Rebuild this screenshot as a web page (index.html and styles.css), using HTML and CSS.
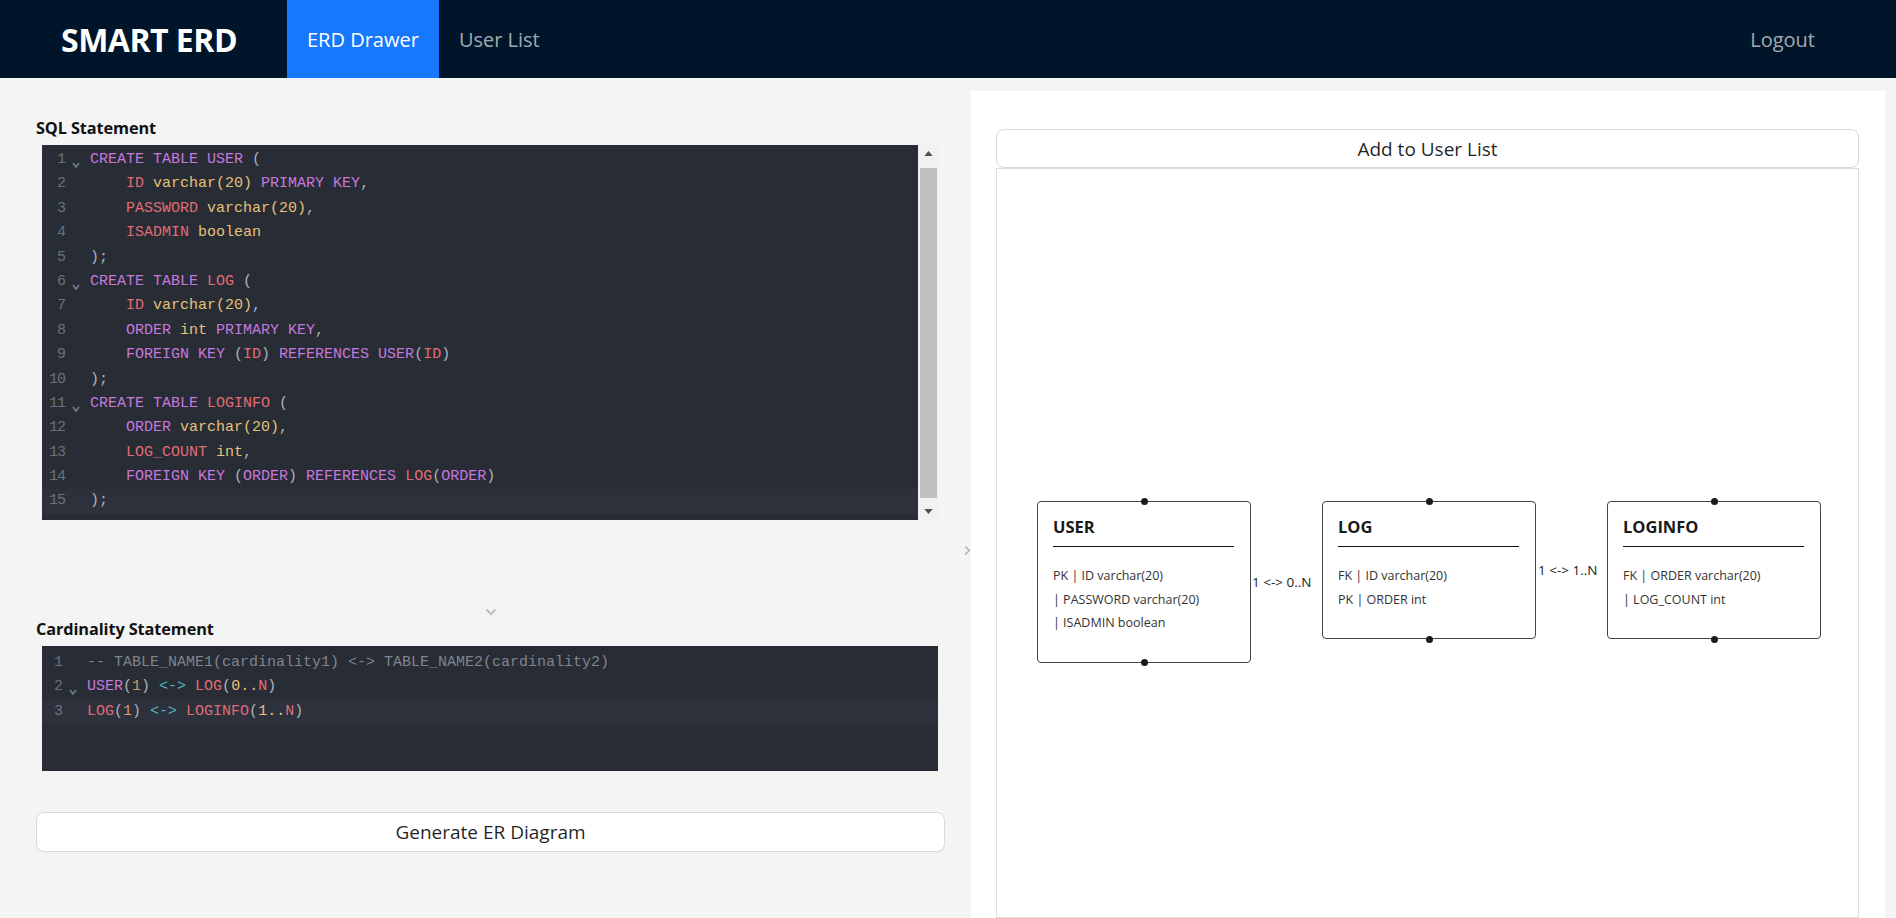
FILE: index.html
```html
<!DOCTYPE html>
<html lang="en">
<head>
<meta charset="utf-8">
<title>SMART ERD</title>
<link rel="stylesheet" href="styles.css">
</head>
<body>
<header class="topbar">
  <div class="logo">SMART ERD</div>
  <nav class="menu">
    <a class="menu-item active">ERD Drawer</a>
    <a class="menu-item">User List</a>
  </nav>
  <a class="logout">Logout</a>
</header>
<main class="main">
  <section class="left-pane">
    <h2 class="section-label">SQL Statement</h2>
    <div class="editor sql-editor">
      <div class="code-area">
        <div class="line"><span class="gutter">1<svg class="fold" viewBox="0 0 8 6"><path d="M1 1 L4 5 L7 1"/></svg></span><span class="txt"><span class="k">CREATE TABLE USER</span> (</span></div>
        <div class="line"><span class="gutter">2</span><span class="txt">    <span class="v">ID</span> <span class="t">varchar(20)</span> <span class="k">PRIMARY KEY</span>,</span></div>
        <div class="line"><span class="gutter">3</span><span class="txt">    <span class="v">PASSWORD</span> <span class="t">varchar(20)</span>,</span></div>
        <div class="line"><span class="gutter">4</span><span class="txt">    <span class="v">ISADMIN</span> <span class="t">boolean</span></span></div>
        <div class="line"><span class="gutter">5</span><span class="txt">);</span></div>
        <div class="line"><span class="gutter">6<svg class="fold" viewBox="0 0 8 6"><path d="M1 1 L4 5 L7 1"/></svg></span><span class="txt"><span class="k">CREATE TABLE</span> <span class="v">LOG</span> (</span></div>
        <div class="line"><span class="gutter">7</span><span class="txt">    <span class="v">ID</span> <span class="t">varchar(20)</span>,</span></div>
        <div class="line"><span class="gutter">8</span><span class="txt">    <span class="k">ORDER</span> <span class="t">int</span> <span class="k">PRIMARY KEY</span>,</span></div>
        <div class="line"><span class="gutter">9</span><span class="txt">    <span class="k">FOREIGN KEY</span> (<span class="v">ID</span>) <span class="k">REFERENCES USER</span>(<span class="v">ID</span>)</span></div>
        <div class="line"><span class="gutter">10</span><span class="txt">);</span></div>
        <div class="line"><span class="gutter">11<svg class="fold" viewBox="0 0 8 6"><path d="M1 1 L4 5 L7 1"/></svg></span><span class="txt"><span class="k">CREATE TABLE</span> <span class="v">LOGINFO</span> (</span></div>
        <div class="line"><span class="gutter">12</span><span class="txt">    <span class="k">ORDER</span> <span class="t">varchar(20)</span>,</span></div>
        <div class="line"><span class="gutter">13</span><span class="txt">    <span class="v">LOG_COUNT</span> <span class="t">int</span>,</span></div>
        <div class="line"><span class="gutter">14</span><span class="txt">    <span class="k">FOREIGN KEY</span> (<span class="k">ORDER</span>) <span class="k">REFERENCES</span> <span class="v">LOG</span>(<span class="k">ORDER</span>)</span></div>
        <div class="line active"><span class="gutter">15</span><span class="txt">);</span></div>
      </div>
      <div class="scrollbar">
        <div class="sb-arrow"><svg viewBox="0 0 10 6"><path d="M0 6 L5 0 L10 6 Z"/></svg></div>
        <div class="sb-thumb"></div>
        <div class="sb-arrow sb-down"><svg viewBox="0 0 10 6"><path d="M0 0 L5 6 L10 0 Z"/></svg></div>
      </div>
    </div>
    <div class="split-handle">
      <svg class="chev-down" viewBox="0 0 12 8"><path d="M1.5 1.5 L6 6 L10.5 1.5"/></svg>
    </div>
    <h2 class="section-label">Cardinality Statement</h2>
    <div class="editor card-editor">
      <div class="code-area">
        <div class="line"><span class="gutter">1</span><span class="txt"><span class="c">-- TABLE_NAME1(cardinality1) &lt;-&gt; TABLE_NAME2(cardinality2)</span></span></div>
        <div class="line"><span class="gutter">2<svg class="fold" viewBox="0 0 8 6"><path d="M1 1 L4 5 L7 1"/></svg></span><span class="txt"><span class="k">USER</span>(<span class="n">1</span>) <span class="o">&lt;-&gt;</span> <span class="v">LOG</span>(<span class="t">0..</span><span class="v">N</span>)</span></div>
        <div class="line active"><span class="gutter">3</span><span class="txt"><span class="v">LOG</span>(<span class="n">1</span>) <span class="o">&lt;-&gt;</span> <span class="v">LOGINFO</span>(<span class="t">1..</span><span class="v">N</span>)</span></div>
      </div>
    </div>
    <button class="btn generate-btn">Generate ER Diagram</button>
  </section>
  <div class="divider">
    <svg class="chev-right" viewBox="0 0 8 12"><path d="M1.5 1.5 L6 6 L1.5 10.5"/></svg>
  </div>
  <section class="right-pane">
    <button class="btn add-btn">Add to User List</button>
    <div class="diagram">
      <div class="entity entity-user">
        <h3 class="entity-title">USER</h3>
        <ul class="attrs">
          <li>PK | ID varchar(20)</li>
          <li>| PASSWORD varchar(20)</li>
          <li>| ISADMIN boolean</li>
        </ul>
      </div>
      <div class="edge-label label-1">1 &lt;-&gt; 0..N</div>
      <div class="entity entity-log">
        <h3 class="entity-title">LOG</h3>
        <ul class="attrs">
          <li>FK | ID varchar(20)</li>
          <li>PK | ORDER int</li>
        </ul>
      </div>
      <div class="edge-label label-2">1 &lt;-&gt; 1..N</div>
      <div class="entity entity-loginfo">
        <h3 class="entity-title">LOGINFO</h3>
        <ul class="attrs">
          <li>FK | ORDER varchar(20)</li>
          <li>| LOG_COUNT int</li>
        </ul>
      </div>
    </div>
  </section>
</main>
</body>
</html>
```

FILE: styles.css
```css
* { box-sizing: border-box; }
html, body { margin: 0; height: 100%; }
body {
  font-family: "Open Sans", "Noto Sans", sans-serif;
  background: #f4f4f4;
  overflow: hidden;
}

/* ---------- header ---------- */
.topbar {
  height: 78px;
  background: #001529;
  display: flex;
  align-items: stretch;
}
.logo {
  width: 287px;
  padding-left: 61px;
  display: flex;
  align-items: center;
  color: #fff;
  font-size: 32px;
  font-weight: 700;
  letter-spacing: -0.5px;
}
.menu { display: flex; }
.menu-item {
  display: flex;
  align-items: center;
  padding: 0 20px;
  font-size: 20px;
  color: rgba(255, 255, 255, 0.65);
  text-decoration: none;
}
.menu-item.active { background: #1677ff; color: #fff; }
.logout {
  margin-left: auto;
  padding-right: 81px;
  display: flex;
  align-items: center;
  font-size: 20px;
  color: rgba(255, 255, 255, 0.65);
}

/* ---------- layout ---------- */
.main {
  display: flex;
  height: calc(100vh - 78px);
}
.left-pane {
  width: 962px;
  flex: none;
  padding: 38px 17px 0 36px;
  display: flex;
  flex-direction: column;
}
.section-label {
  margin: 0 0 5px;
  font-size: 16.3px;
  font-weight: 700;
  line-height: 24px;
  color: #111;
  letter-spacing: -0.1px;
}

/* ---------- code editors ---------- */
.editor {
  margin: 0 7px 0 6px;
  display: flex;
  background: #282c34;
  font-family: "Liberation Mono", "DejaVu Sans Mono", monospace;
  font-size: 15px;
  color: #abb2bf;
}
.sql-editor { height: 375px; }
.card-editor { height: 125px; }
.code-area { flex: 1; padding-top: 3px; }
.card-editor .code-area { padding-top: 5px; }
.line {
  display: flex;
  height: 24.4px;
  line-height: 24.4px;
}
.line.active { background: #2c313c; }
.gutter {
  position: relative;
  width: 40px;
  flex: none;
  padding-right: 17px;
  text-align: right;
  color: #6b717d;
  font-size: 15px;
  letter-spacing: -1px;
}
.card-editor .gutter { width: 38px; padding-right: 18px; }
.fold {
  position: absolute;
  right: 2px;
  top: 14px;
  width: 8px;
  height: 6px;
  fill: none;
  stroke: #6f7f92;
  stroke-width: 1.6;
}
.card-editor .fold { right: 3px; }
.txt { padding-left: 8px; white-space: pre; }
.card-editor .txt { padding-left: 7px; }
.k { color: #c678dd; }
.v { color: #e06c75; }
.t { color: #e5c07b; }
.n { color: #d19a66; }
.o { color: #56b6c2; }
.c { color: #7f848e; }

.scrollbar {
  width: 20px;
  flex: none;
  background: #f1f1f1;
  padding: 0 1px 0 2px;
  display: flex;
  flex-direction: column;
}
.sb-arrow {
  height: 17px;
  display: flex;
  align-items: center;
  justify-content: center;
}
.sb-arrow svg { width: 9px; height: 5px; fill: #505050; }
.sb-thumb {
  height: 330px;
  margin-top: 6px;
  background: #c1c1c1;
}
.sb-down { margin-top: auto; }

.split-handle {
  height: 97px;
  display: flex;
  align-items: flex-end;
  justify-content: center;
  padding-bottom: 1px;
}
.chev-down {
  width: 12px;
  height: 8px;
  fill: none;
  stroke: #bdbdbd;
  stroke-width: 2;
}

/* ---------- buttons ---------- */
.btn {
  font-family: "Open Sans", "Noto Sans", sans-serif;
  font-size: 19px;
  color: rgba(0, 0, 0, 0.88);
  background: #fff;
  border: 1px solid #d9d9d9;
  border-radius: 8px;
  box-shadow: 0 2px 0 rgba(0, 0, 0, 0.02);
  padding: 0;
  cursor: pointer;
}
.generate-btn {
  height: 40px;
  margin-top: 41px;
  width: 100%;
}

/* ---------- divider ---------- */
.divider {
  width: 9px;
  flex: none;
  padding-top: 467px;
  padding-right: 0;
  display: flex;
  justify-content: flex-end;
  align-items: flex-start;
}
.chev-right {
  width: 7px;
  height: 11px;
  fill: none;
  stroke: #b5b5b5;
  stroke-width: 2;
}

/* ---------- right pane ---------- */
.right-pane {
  width: 914px;
  flex: none;
  margin: 13px 11px 0 0;
  background: #fff;
  padding: 38px 26px 0 25px;
  display: flex;
  flex-direction: column;
}
.add-btn { height: 39px; flex: none; }
.diagram {
  position: relative;
  flex: 1;
  border: 1px solid #dedede;
}

.entity {
  position: absolute;
  top: 332px;
  width: 214px;
  background: #fff;
  border: 1.5px solid #444;
  border-radius: 4px;
  padding: 14px 16px 27px 15px;
  color: #333;
}
.entity::before,
.entity::after {
  content: "";
  position: absolute;
  left: 50%;
  width: 7px;
  height: 7px;
  margin-left: -3.5px;
  background: #1b1b1f;
  border-radius: 50%;
}
.entity::before { top: -4.5px; }
.entity::after { bottom: -4.5px; }
.entity-user { left: 40px; }
.entity-log { left: 325px; }
.entity-loginfo { left: 610px; }

.entity-title {
  margin: 0;
  font-size: 16.5px;
  font-weight: 700;
  line-height: 22px;
  color: #1a1a1a;
  padding-bottom: 8px;
  border-bottom: 1.5px solid #111;
}
.attrs {
  list-style: none;
  margin: 17px 0 0;
  padding: 0;
  font-size: 12.5px;
  line-height: 23.6px;
}

.edge-label {
  position: absolute;
  font-size: 13.5px;
  line-height: 16px;
  color: #222;
  white-space: nowrap;
}
.label-1 { left: 255px; top: 405px; }
.label-2 { left: 541px; top: 393px; }
```
